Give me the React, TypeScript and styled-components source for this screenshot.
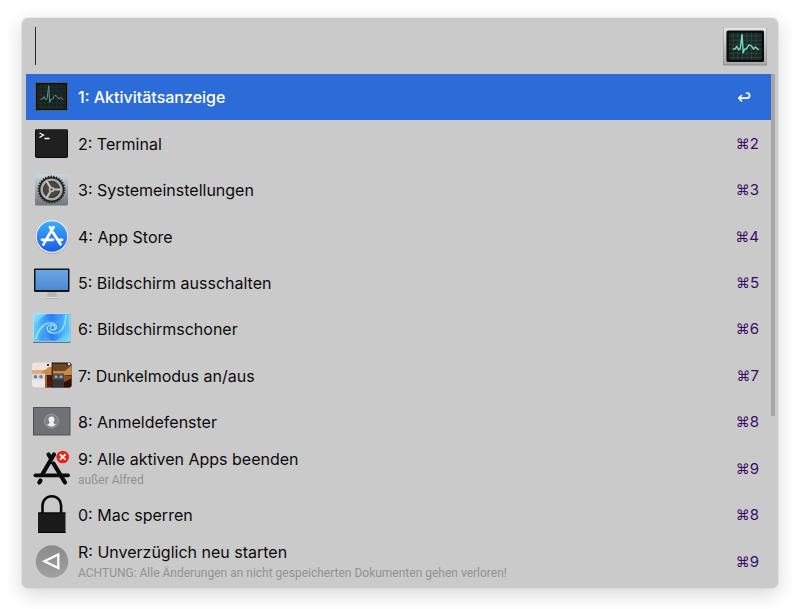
import React from "react";
import styled, { createGlobalStyle } from "styled-components";

const GlobalStyle = createGlobalStyle`
  * { box-sizing: border-box; }
  body {
    margin: 0;
    background: #fff;
    font-family: Inter, "Liberation Sans", sans-serif;
  }
`;

const Page = styled.main`
  display: flex;
  min-height: 100vh;
  padding: 18px 22px 21px;
`;

const Panel = styled.section`
  flex: 1;
  min-width: 0;
  display: flex;
  flex-direction: column;
  padding-bottom: 3px;
  border-radius: 6px;
  background: #cacaca;
  box-shadow: 0 0 0 1px rgba(0, 0, 0, 0.05), 0 6px 20px rgba(0, 0, 0, 0.16);
`;

const SearchBar = styled.header`
  display: flex;
  align-items: center;
  height: 56px;
  padding: 0 9px 0 13px;
`;

const Caret = styled.span`
  width: 1px;
  height: 38px;
  background: #2c2c2c;
`;

const SearchInput = styled.input`
  flex: 1;
  min-width: 0;
  height: 38px;
  padding: 0 4px;
  border: 0;
  outline: 0;
  background: transparent;
  caret-color: transparent;
  color: #111;
  font: 28px Inter, "Liberation Sans", sans-serif;
`;

const HeaderIcon = styled.svg`
  display: block;
  width: 48px;
  height: 42px;
`;

const Results = styled.div`
  flex: 1;
  display: grid;
  grid-template-columns: 1fr 4px;
  padding: 0 3px 0 4px;
`;

const List = styled.ul`
  display: grid;
  grid-auto-rows: 1fr;
  margin: 0;
  padding: 0;
  list-style: none;
`;

const Item = styled.li`
  display: flex;
`;

const Row = styled.button<{ $selected?: boolean }>`
  flex: 1;
  min-width: 0;
  display: flex;
  align-items: center;
  gap: 6px;
  padding: 0 12px 0 6px;
  border: 0;
  background: ${(p) => (p.$selected ? "#2c6cd8" : "transparent")};
  color: ${(p) => (p.$selected ? "#fff" : "#0c0c0c")};
  font-family: inherit;
  text-align: left;
`;

const RowIcon = styled.svg`
  flex: none;
  width: 40px;
  height: 40px;
  overflow: visible;
`;

const Labels = styled.span`
  flex: 1;
  min-width: 0;
  display: flex;
  flex-direction: column;
`;

const Title = styled.span<{ $selected?: boolean }>`
  font-size: 16px;
  line-height: 20px;
  font-weight: ${(p) => (p.$selected ? 500 : 400)};
`;

const Subtitle = styled.span`
  padding-top: 3px;
  color: #929292;
  font-family: Roboto, "Liberation Sans", sans-serif;
  font-size: 12px;
  line-height: 16px;
`;

const Shortcut = styled.kbd`
  display: flex;
  align-items: center;
  color: #3a0a66;
  font-family: inherit;
  font-size: 15px;
  line-height: 20px;
`;

const Command = styled.span`
  font-family: "DejaVu Sans", sans-serif;
  font-size: 14px;
`;

const ReturnIcon = styled.svg`
  width: 14px;
  height: 12px;
  margin-right: 8px;
`;

const Scrollbar = styled.div`
  height: 67%;
  background: #a6a6a6;
`;

const pulse =
  "M8.600 22h2.100l1.300-2.400 1.800 3.200 1.300-1.100L16.700 8.800l1 16.600L19 22h1.500l2.400-3.700 2.100 1.100 1.800 2.600 1.500-1.800 3.100 2.600";

const ActivityArt = ({ dim }: { dim?: boolean }) => (
  <g>
    <rect x="3.500" y="5.500" width="32" height="28" rx="1" fill="#060908" stroke={dim ? "#56606c" : "#101212"} />
    <rect x="5" y="7" width="29" height="25" fill={dim ? "#17211f" : "#182824"} />
    <path
      d="M9 7v25M13 7v25M17 7v25M21 7v25M25 7v25M29 7v25M5 10h29M5 14h29M5 18h29M5 22h29M5 26h29M5 30h29"
      stroke={dim ? "#2b3f3a" : "#3b554e"}
      strokeWidth=".5"
    />
    <path
      d={pulse}
      fill="none"
      stroke={dim ? "#5d948a" : "#76d4b9"}
      strokeWidth={dim ? 1 : 1.3}
      strokeLinejoin="round"
    />
  </g>
);

const TerminalArt = () => (
  <g>
    <rect x="3.500" y="5.500" width="32" height="28" rx="1" fill="#202020" stroke="#0b0b0b" />
    <path d="M3.500 5.500h32" stroke="#555" strokeWidth=".7" />
    <path d="m7.500 9 4 2-4 2.500M12.500 14.500h5" fill="none" stroke="#fff" strokeWidth="1.300" />
  </g>
);

const GearArt = () => (
  <g>
    <defs>
      <linearGradient id="gearBg" x2="0" y2="1">
        <stop stopColor="#c8d8df" />
        <stop offset="1" stopColor="#70757a" />
      </linearGradient>
    </defs>
    <rect x="3" y="4" width="33" height="31.500" rx="1.500" fill="url(#gearBg)" />
    <circle cx="19.500" cy="19.500" r="12.800" fill="#222426" />
    <circle cx="19.500" cy="19.500" r="13" fill="none" stroke="#222426" strokeWidth="1.800" strokeDasharray="1.400 1.320" />
    <circle cx="19.500" cy="19.500" r="9.800" fill="#4a4945" stroke="#aaa9a3" strokeWidth="2.600" />
    <circle cx="19.500" cy="19.500" r="7.900" fill="none" stroke="#302f2c" strokeWidth="1" />
    <path d="M19.500 19.500h10M19.500 19.500l-5-8.700M19.500 19.500l-5 8.700" stroke="#c3c1ba" strokeWidth="2.200" />
    <circle cx="19.500" cy="19.500" r="2.800" fill="#c3c1ba" />
    <circle cx="19.500" cy="19.500" r="1.200" fill="#55544f" />
  </g>
);

const AppStoreArt = () => (
  <g>
    <defs>
      <linearGradient id="storeBg" x2="0" y2="1">
        <stop stopColor="#39aefa" />
        <stop offset="1" stopColor="#1b5cec" />
      </linearGradient>
    </defs>
    <circle cx="20" cy="20" r="17" fill="#aaa" />
    <circle cx="20" cy="19.500" r="16.500" fill="#eef1f4" />
    <circle cx="20" cy="19.500" r="15.200" fill="url(#storeBg)" />
    <g stroke="#fff" strokeWidth="2.800" strokeLinecap="round" fill="none">
      <path d="m21.500 10.300-8.500 14.200M18 10.300l1.500 2.400M21.200 15.700l7.300 11.600M10 22.800h11M26 22.800h4M12 26.600l-.6 1" />
    </g>
  </g>
);

const MonitorArt = () => (
  <g>
    <defs>
      <linearGradient id="screenBg" x2="0" y2="1">
        <stop stopColor="#6aa5e4" />
        <stop offset="1" stopColor="#4c8ad0" />
      </linearGradient>
    </defs>
    <path d="M16 29h8l1 5h-10z" fill="#b4b4b4" />
    <rect x="14" y="34" width="12" height="1.500" rx=".7" fill="#e4e4e4" />
    <rect x="14" y="35.300" width="12" height=".7" fill="#999" />
    <rect x="2" y="5.500" width="35.500" height="23.500" rx="1" fill="#11151a" />
    <rect x="3.500" y="7" width="32.500" height="20" fill="url(#screenBg)" />
  </g>
);

const SwirlArt = () => (
  <g>
    <defs>
      <linearGradient id="swirlBg" x2="1" y2="0">
        <stop stopColor="#62cffb" />
        <stop offset=".5" stopColor="#2b7cf0" />
        <stop offset="1" stopColor="#5ccdfb" />
      </linearGradient>
      <linearGradient id="swirlArm" x2="1" y2="1">
        <stop stopColor="#8df0fd" />
        <stop offset=".5" stopColor="#3c95f4" />
        <stop offset="1" stopColor="#72e4fc" />
      </linearGradient>
    </defs>
    <rect x="1" y="4" width="37.500" height="30" rx="1" fill="#56768c" />
    <rect x="1" y="4" width="37.500" height="28.700" rx="1" fill="#b4dcf0" />
    <rect x="2" y="5" width="35.500" height="26.800" fill="url(#swirlBg)" />
    <path d="M2 5h13C9 8 5 13 2 21zM37.500 31.800h-14c7-3 11-8 14-15z" fill="url(#swirlArm)" opacity=".9" />
    <path
      d="M30 5c-1 8-4 11-9 10-6-1-10 3-9 8 1 4 4 7 8 8.800H8C6 27 6 21 9 17c3-4 7-5 12-5 4 0 6-3 7-7z"
      fill="url(#swirlArm)"
      opacity=".6"
    />
    <g fill="none" stroke="#a8eefe">
      <path d="M4 30c2-10 8-16 15-16 6 0 7 6 3 7-4 1-5-3-2-4" strokeWidth="1.200" />
      <path d="M34 6c-1 13-5 19-13 18-7-1-7-7-3-8 4-1 6 2 4 4" strokeWidth="1.200" />
    </g>
  </g>
);

const DarkModeArt = () => (
  <g>
    <defs>
      <clipPath id="modeClip">
        <rect x="0" y="6.500" width="39.500" height="25" rx="2.500" />
      </clipPath>
    </defs>
    <g clipPath="url(#modeClip)">
      <rect y="6" width="20" height="26" fill="#eee3da" />
      <path d="M0 14h13l4-3h3v21H0z" fill="#c98c4d" />
      <path d="M0 14h12l-3 3H0z" fill="#e1ad77" />
      <path d="M13 19h7v13h-7z" fill="#4c1d0e" />
      <path d="M13 19h2v13h-2z" fill="#a35f2d" />
      <rect y="18" width="13" height="14" fill="#e9e9ea" />
      <rect y="17.500" width="13" height="6" fill="#d5d8dc" />
      <rect x="20" y="6" width="20" height="26" fill="#32221b" />
      <path d="M20 8h20v3l-7 5H20z" fill="#6d4526" />
      <path d="M21 15h12l7-6v10l-4 2H21z" fill="#c78849" />
      <path d="M32 19h8v13h-8z" fill="#311008" />
      <path d="M32 19l8 1v2l-8 4z" fill="#8d501f" />
      <rect x="20" y="18" width="12" height="14" fill="#353535" />
      <rect x="20" y="17.500" width="12" height="6" fill="#4d5051" />
      <path d="M20 6v26" stroke="#21130d" strokeWidth=".8" />
      <g fill="#777d85">
        <circle cx="3.500" cy="20.700" r="1.800" />
        <circle cx="9" cy="20.700" r="1.800" />
      </g>
      <g fill="#a2a5a7">
        <circle cx="24" cy="20.700" r="1.500" />
        <circle cx="29" cy="20.700" r="1.500" />
      </g>
      <path d="M15 8h2v2h-2zM34 7h2v2h-2z" fill="#333" />
      <path d="M36 7h2v2h-2z" fill="#ddd" />
    </g>
  </g>
);

const LoginArt = () => (
  <g>
    <rect x="1.500" y="5.500" width="36.500" height="27.500" fill="#707175" stroke="#515257" />
    <circle cx="19.500" cy="19" r="7" fill="#808184" stroke="#a1a1a3" strokeWidth=".8" />
    <path
      d="M19.500 14.500c2.300 0 3.200 1.500 2.900 3.300-.2 1.300-.6 2-1.100 2.700.2 1.400 1.700 1.400 2.600 2-1.200 1.400-2.700 2-4.400 2s-3.200-.6-4.400-2c.9-.6 2.400-.6 2.600-2-.5-.7-.9-1.400-1.100-2.700-.3-1.800.6-3.300 2.900-3.300z"
      fill="#eee"
    />
  </g>
);

const QuitAppsArt = () => (
  <g>
    <g stroke="#0b0b0b" strokeWidth="4.200" strokeLinecap="round" fill="none">
      <path d="M22 5.500 10.500 25M16.500 5.500l2.500 4M21.500 14.500l11.500 19" />
      <path d="M3.500 26.300h32.500" strokeWidth="3.800" />
      <path d="M8.500 31.500 7.300 33.500" />
    </g>
    <circle cx="30.700" cy="8" r="6.300" fill="#e9241d" />
    <path d="m28 5.300 5.400 5.400M33.400 5.300 28 10.700" stroke="#fff" strokeWidth="1.800" />
  </g>
);

const LockArt = () => (
  <g>
    <path d="M10.500 18V10.500a9.300 9.300 0 0 1 18.600 0V18" fill="none" stroke="#080808" strokeWidth="2.600" />
    <rect x="6" y="17.500" width="27.500" height="20.500" fill="#1a1a1a" />
    <path d="M6 18h27.500M6 37.500h27.500" stroke="#050505" />
  </g>
);

const RestartArt = () => (
  <g>
    <defs>
      <linearGradient id="restartBg" x2="0" y2="1">
        <stop stopColor="#8b8b8b" />
        <stop offset="1" stopColor="#a0a0a0" />
      </linearGradient>
    </defs>
    <circle cx="20" cy="19.500" r="16.200" fill="url(#restartBg)" />
    <path d="M26.300 12.500v13.600L12.300 19.300z" fill="none" stroke="#fff" strokeWidth="2.200" />
  </g>
);

type Entry = { title: string; subtitle?: string; hotkey?: string; art: React.ReactNode };

const entries: Entry[] = [
  { title: "1: Aktivitätsanzeige", art: <ActivityArt dim /> },
  { title: "2: Terminal", hotkey: "2", art: <TerminalArt /> },
  { title: "3: Systemeinstellungen", hotkey: "3", art: <GearArt /> },
  { title: "4: App Store", hotkey: "4", art: <AppStoreArt /> },
  { title: "5: Bildschirm ausschalten", hotkey: "5", art: <MonitorArt /> },
  { title: "6: Bildschirmschoner", hotkey: "6", art: <SwirlArt /> },
  { title: "7: Dunkelmodus an/aus", hotkey: "7", art: <DarkModeArt /> },
  { title: "8: Anmeldefenster", hotkey: "8", art: <LoginArt /> },
  { title: "9: Alle aktiven Apps beenden", subtitle: "außer Alfred", hotkey: "9", art: <QuitAppsArt /> },
  { title: "0: Mac sperren", hotkey: "8", art: <LockArt /> },
  {
    title: "R: Unverzüglich neu starten",
    subtitle: "ACHTUNG: Alle Änderungen an nicht gespeicherten Dokumenten gehen verloren!",
    hotkey: "9",
    art: <RestartArt />,
  },
];

export default function App() {
  return (
    <>
      <GlobalStyle />
      <Page>
        <Panel>
          <SearchBar>
            <Caret />
            <SearchInput type="text" aria-label="Suche" />
            <HeaderIcon viewBox="0 0 48 42" aria-hidden="true">
              <defs>
                <linearGradient id="frameBg" x2="0" y2="1">
                  <stop stopColor="#e4e4e4" />
                  <stop offset="1" stopColor="#a8a8a8" />
                </linearGradient>
              </defs>
              <rect x="2" y="2.500" width="44" height="38" rx="1" fill="#8a8a8a" />
              <rect x="2.500" y="2.500" width="43" height="37" rx="1" fill="url(#frameBg)" />
              <g transform="translate(2 0) scale(1.140 1.090)">
                <ActivityArt />
              </g>
            </HeaderIcon>
          </SearchBar>
          <Results>
            <List>
              {entries.map((entry, index) => (
                <Item key={entry.title}>
                  <Row type="button" $selected={index === 0}>
                    <RowIcon viewBox="0 0 40 40" aria-hidden="true">
                      {entry.art}
                    </RowIcon>
                    <Labels>
                      <Title $selected={index === 0}>{entry.title}</Title>
                      {entry.subtitle && <Subtitle>{entry.subtitle}</Subtitle>}
                    </Labels>
                    {entry.hotkey ? (
                      <Shortcut>
                        <Command>⌘</Command>
                        {entry.hotkey}
                      </Shortcut>
                    ) : (
                      <ReturnIcon viewBox="0 0 14 12" aria-hidden="true">
                        <path
                          d="M9.500 2h.5a2.600 2.600 0 0 1 0 5.200H2M4.500 4.500 1.800 7.200l2.700 2.700"
                          fill="none"
                          stroke="#fff"
                          strokeWidth="1.700"
                          strokeLinecap="round"
                          strokeLinejoin="round"
                        />
                      </ReturnIcon>
                    )}
                  </Row>
                </Item>
              ))}
            </List>
            <Scrollbar />
          </Results>
        </Panel>
      </Page>
    </>
  );
}
